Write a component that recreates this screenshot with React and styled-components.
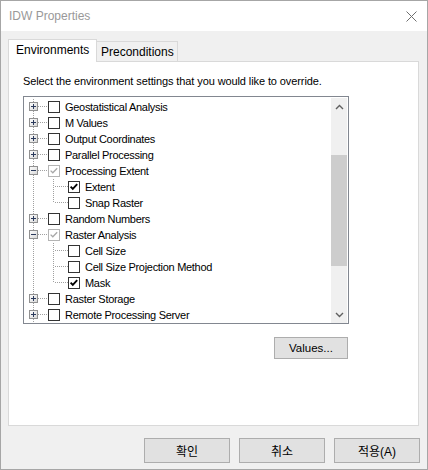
import React from "react";
import styled, { createGlobalStyle } from "styled-components";

const GlobalStyle = createGlobalStyle`
  html, body {
    margin: 0;
    padding: 0;
    background: #ffffff;
  }
  body {
    font-family: "Liberation Sans", Arial, sans-serif;
  }
`;

const Window = styled.div`
  box-sizing: border-box;
  width: 428px;
  height: 470px;
  border: 1px solid #a6a6a6;
  background: #f0f0f0;
  display: flex;
  flex-direction: column;
`;

const TitleBar = styled.div`
  height: 30px;
  background: #ffffff;
  display: flex;
  align-items: center;
  justify-content: space-between;
  padding: 0 10px 0 8px;
`;

const Title = styled.span`
  font-size: 12px;
  color: #999999;
`;

const Body = styled.div`
  flex: 1;
  display: flex;
  flex-direction: column;
  padding: 8px 7px 6px 7px;
`;

const TabStrip = styled.div`
  height: 22px;
  display: flex;
  align-items: flex-end;
`;

const Tab = styled.div`
  box-sizing: border-box;
  position: relative;
  width: ${(p) => p.$width}px;
  height: ${(p) => (p.$active ? 23 : 20)}px;
  margin-bottom: ${(p) => (p.$active ? -1 : 0)}px;
  margin-left: ${(p) => (p.$active ? 0 : -1)}px;
  z-index: ${(p) => (p.$active ? 1 : 0)};
  border: 1px solid #d9d9d9;
  border-bottom: none;
  background: ${(p) => (p.$active ? "#ffffff" : "#f0f0f0")};
  font-size: 12px;
  color: #000;
  display: flex;
  align-items: center;
  padding-left: ${(p) => (p.$active ? 7 : 4)}px;
  padding-bottom: ${(p) => (p.$active ? 2 : 0)}px;
`;

const Panel = styled.div`
  box-sizing: border-box;
  height: 365px;
  margin-right: 1px;
  background: #ffffff;
  border: 1px solid #d9d9d9;
  padding: 11px 14px 0 14px;
`;

const Description = styled.div`
  font-size: 11px;
  line-height: 16px;
  color: #000;
  margin-bottom: 7px;
  letter-spacing: -0.1px;
`;

const TreeBox = styled.div`
  box-sizing: border-box;
  width: 326px;
  height: 228px;
  border: 1px solid #828790;
  display: flex;
  overflow: hidden;
`;

const TreeList = styled.div`
  flex: 1;
  padding-top: 2px;
  overflow: hidden;
`;

const Row = styled.div`
  height: 16px;
  display: flex;
  align-items: center;
`;

const Gutter = styled.svg`
  flex: none;
  display: block;
`;

const Check = styled.div`
  box-sizing: border-box;
  flex: none;
  width: 12px;
  height: 12px;
  border: 1px solid ${(p) => (p.$gray ? "#b4b4b4" : "#333333")};
  background: #ffffff;
  display: flex;
  align-items: center;
  justify-content: center;
`;

const Label = styled.span`
  margin-left: 5px;
  font-size: 11px;
  letter-spacing: -0.3px;
  color: #000;
  white-space: nowrap;
`;

const ScrollBar = styled.div`
  width: 16px;
  margin: 1px 1px 0 0;
  background: #f0f0f0;
  display: flex;
  flex-direction: column;
`;

const ArrowButton = styled.div`
  height: 17px;
  display: flex;
  align-items: center;
  justify-content: center;
`;

const Track = styled.div`
  flex: 1;
`;

const Thumb = styled.div`
  margin-top: ${(p) => p.$top}px;
  height: ${(p) => p.$height}px;
  background: #cdcdcd;
`;

const ValuesRow = styled.div`
  width: 325px;
  display: flex;
  justify-content: flex-end;
  margin-top: 13px;
`;

const Button = styled.button`
  box-sizing: border-box;
  width: ${(p) => p.$width}px;
  height: ${(p) => p.$height}px;
  background: #e1e1e1;
  border: 1px solid #adadad;
  padding: 0;
  font-family: "Liberation Sans", Arial, "Noto Sans CJK KR", sans-serif;
  font-size: ${(p) => p.$size}px;
  color: #000;
`;

const ButtonRow = styled.div`
  display: flex;
  justify-content: flex-end;
  gap: 9px;
  margin-top: 12px;
`;

const rows = [
  { label: "Geostatistical Analysis", level: 0, exp: "+" },
  { label: "M Values", level: 0, exp: "+" },
  { label: "Output Coordinates", level: 0, exp: "+" },
  { label: "Parallel Processing", level: 0, exp: "+" },
  { label: "Processing Extent", level: 0, exp: "-", check: "gray" },
  { label: "Extent", level: 1, check: "on" },
  { label: "Snap Raster", level: 1, last: true },
  { label: "Random Numbers", level: 0, exp: "+" },
  { label: "Raster Analysis", level: 0, exp: "-", check: "gray" },
  { label: "Cell Size", level: 1 },
  { label: "Cell Size Projection Method", level: 1 },
  { label: "Mask", level: 1, check: "on", last: true },
  { label: "Raster Storage", level: 0, exp: "+" },
  { label: "Remote Processing Server", level: 0, exp: "+" },
];

const dot = { stroke: "#a0a0a0", strokeWidth: 1, strokeDasharray: "1 1" };

const TreeLines = ({ level, exp, last }) => {
  const w = level ? 44 : 24;
  return (
    <Gutter width={w} height="16" viewBox={`0 0 ${w} 16`}>
      <line x1="9.5" y1="0" x2="9.5" y2="16" {...dot} />
      {level === 0 && <line x1="14" y1="7.5" x2="24" y2="7.5" {...dot} />}
      {level === 1 && (
        <>
          <line x1="29.5" y1="0" x2="29.5" y2={last ? 8 : 16} {...dot} />
          <line x1="31" y1="7.5" x2="44" y2="7.5" {...dot} />
        </>
      )}
      {exp && (
        <>
          <defs>
            <linearGradient id="expg" x1="0" y1="0" x2="1" y2="1">
              <stop offset="0" stopColor="#ffffff" />
              <stop offset="1" stopColor="#d6d6d6" />
            </linearGradient>
          </defs>
          <rect x="5.5" y="3.5" width="8" height="8" fill="url(#expg)" stroke="#919191" />
          <line x1="7" y1="7.5" x2="12" y2="7.5" stroke="#2b3a5c" />
          {exp === "+" && <line x1="9.5" y1="5" x2="9.5" y2="10" stroke="#2b3a5c" />}
        </>
      )}
    </Gutter>
  );
};

const CheckBox = ({ state }) => (
  <Check $gray={state === "gray"}>
    {state && (
      <svg width="10" height="10" viewBox="0 0 10 10">
        <path
          d="M1.6 4.6 L3.8 6.8 L8.2 2.2"
          fill="none"
          stroke={state === "gray" ? "#a8a8a8" : "#000000"}
          strokeWidth={state === "gray" ? 1.3 : 1.9}
        />
      </svg>
    )}
  </Check>
);

const Chevron = ({ up }) => (
  <svg width="9" height="6" viewBox="0 0 9 6">
    <path
      d={up ? "M1 5 L4.5 1.5 L8 5" : "M1 1 L4.5 4.5 L8 1"}
      fill="none"
      stroke="#606060"
      strokeWidth="1.4"
    />
  </svg>
);

const App = () => (
  <>
    <GlobalStyle />
    <Window>
      <TitleBar>
        <Title>IDW Properties</Title>
        <svg width="11" height="11" viewBox="0 0 11 11">
          <path d="M0.5 0.5 L10.5 10.5 M10.5 0.5 L0.5 10.5" stroke="#6e6e6e" strokeWidth="1" />
        </svg>
      </TitleBar>
      <Body>
        <TabStrip>
          <Tab $active $width={89}>Environments</Tab>
          <Tab $width={82}>Preconditions</Tab>
        </TabStrip>
        <Panel>
          <Description>
            Select the environment settings that you would like to override.
          </Description>
          <TreeBox>
            <TreeList>
              {rows.map((r) => (
                <Row key={r.label}>
                  <TreeLines level={r.level} exp={r.exp} last={r.last} />
                  <CheckBox state={r.check} />
                  <Label>{r.label}</Label>
                </Row>
              ))}
            </TreeList>
            <ScrollBar>
              <ArrowButton>
                <Chevron up />
              </ArrowButton>
              <Track>
                <Thumb $top={40} $height={111} />
              </Track>
              <ArrowButton>
                <Chevron />
              </ArrowButton>
            </ScrollBar>
          </TreeBox>
          <ValuesRow>
            <Button $width={74} $height={22} $size={11.5}>
              Values...
            </Button>
          </ValuesRow>
        </Panel>
        <ButtonRow>
          <Button $width={86} $height={25} $size={12}>확인</Button>
          <Button $width={86} $height={25} $size={12}>취소</Button>
          <Button $width={86} $height={25} $size={12}>적용(A)</Button>
        </ButtonRow>
      </Body>
    </Window>
  </>
);

export default App;
